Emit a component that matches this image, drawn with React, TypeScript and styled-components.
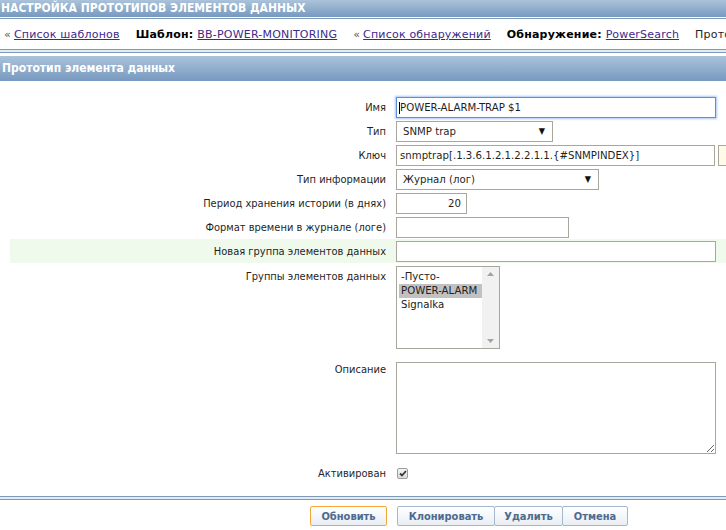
import styled, { createGlobalStyle } from 'styled-components';

const GlobalStyle = createGlobalStyle`
  html, body {
    margin: 0;
    padding: 0;
    background: #ffffff;
  }
  body {
    font-family: "DejaVu Sans Condensed", "DejaVu Sans", sans-serif;
    font-size: 11px;
    color: #1f1f1f;
  }
`;

const Page = styled.div`
  width: 726px;
  height: 530px;
  overflow: hidden;
`;

const Bar = styled.div<{ $tall?: boolean }>`
  height: ${(p) => (p.$tall ? '25px' : '17px')};
  line-height: ${(p) => (p.$tall ? '25px' : '17px')};
  padding-left: ${(p) => (p.$tall ? '2px' : '1px')};
  margin-bottom: ${(p) => (p.$tall ? '0' : '1px')};
  background: linear-gradient(#abc3db, #7799bf);
  color: #ffffff;
  font-weight: bold;
  font-size: 12px;
  white-space: nowrap;
`;

const Rule = styled.div<{ $double?: boolean }>`
  height: ${(p) => (p.$double ? '2px' : '0')};
  border-top: 1px solid #7d9abd;
  border-bottom: ${(p) => (p.$double ? '1px solid #7d9abd' : 'none')};
  background: ${(p) => (p.$double ? '#e4ebf3' : 'transparent')};
`;

const Nav = styled.div`
  display: flex;
  align-items: center;
  height: 29px;
  padding-left: 4px;
  margin-top: 1px;
  white-space: nowrap;
  overflow: hidden;
  font-family: "DejaVu Sans", sans-serif;
  font-size: 11px;
  letter-spacing: 0.2px;
`;

const NavItem = styled.span`
  margin-right: 16px;
  flex: none;
`;

const Quote = styled.span`
  color: #555;
  margin-right: 3px;
`;

const NavLabel = styled.b`
  color: #000;
  margin-right: 4px;
`;

const Link = styled.a`
  color: #3b2a8c;
  text-decoration: underline;
  cursor: pointer;
`;

const Spacer = styled.div`
  height: 3px;
`;

const Form = styled.div`
  padding: 14px 0 0 10px;
`;

const Row = styled.div<{ $hl?: boolean; $top?: boolean }>`
  display: grid;
  grid-template-columns: 376px 1fr;
  column-gap: 10px;
  align-items: ${(p) => (p.$top ? 'start' : 'center')};
  min-height: 24px;
  background: ${(p) => (p.$hl ? '#effaec' : 'transparent')};
`;

const Label = styled.div<{ $pt?: number }>`
  text-align: right;
  white-space: nowrap;
  padding-top: ${(p) => p.$pt ?? 0}px;
`;

const Field = styled.div`
  display: flex;
  align-items: center;
  gap: 3px;
  position: relative;
  white-space: nowrap;
`;

const TextInput = styled.input<{ $w: number; $focus?: boolean; $right?: boolean }>`
  box-sizing: border-box;
  width: ${(p) => p.$w}px;
  height: 21px;
  padding: 0 ${(p) => (p.$right ? '5px' : '3px')};
  border: 1px solid ${(p) => (p.$focus ? '#5b8fdc' : '#a9a79b')};
  box-shadow: ${(p) => (p.$focus ? '0 0 2px 1px #a9c8f3' : 'none')};
  font-family: inherit;
  font-size: 11.3px;
  color: #1f1f1f;
  text-align: ${(p) => (p.$right ? 'right' : 'left')};
  background: #fff;
  outline: none;
`;

const Caret = styled.span`
  position: absolute;
  left: 3px;
  top: 5px;
  width: 1px;
  height: 12px;
  background: #000;
`;

const PickButton = styled.button`
  box-sizing: border-box;
  height: 21px;
  width: 60px;
  flex: none;
  border: 1px solid #a9a79b;
  background: #fdfbe8;
  padding: 0;
`;

const SelectBox = styled.div<{ $w: number }>`
  box-sizing: border-box;
  width: ${(p) => p.$w}px;
  height: 21px;
  display: flex;
  align-items: center;
  justify-content: space-between;
  padding: 0 7px 0 6px;
  border: 1px solid #a9a79b;
  background: #fff;
  font-size: 11.3px;
`;

const Arrow = styled.span`
  font-size: 9px;
  color: #111;
`;

const ListBox = styled.div`
  box-sizing: border-box;
  width: 104px;
  height: 83px;
  margin: 3px 0 13px;
  border: 1px solid #a9a79b;
  display: flex;
  background: #fff;
`;

const Options = styled.div`
  flex: 1;
  padding: 3px 0 0 2px;
`;

const Option = styled.div<{ $sel?: boolean }>`
  line-height: 14px;
  padding-left: 2px;
  background: ${(p) => (p.$sel ? '#c1c1c1' : 'transparent')};
  color: #222;
  font-size: 11.3px;
`;

const ScrollTrack = styled.div`
  width: 17px;
  background: #f1f1f1;
  display: flex;
  flex-direction: column;
  justify-content: space-between;
  align-items: center;
  padding: 5px 0;
`;

const Description = styled.textarea`
  box-sizing: border-box;
  width: 320px;
  height: 92px;
  border: 1px solid #a9a79b;
  font-family: inherit;
  font-size: 11px;
  padding: 2px;
  margin-bottom: 7px;
  outline: none;
  display: block;
`;

const CheckBox = styled.span`
  box-sizing: border-box;
  display: inline-flex;
  align-items: center;
  justify-content: center;
  width: 11px;
  height: 11px;
  margin-left: 1px;
  border: 1px solid #9d9d9d;
  border-radius: 2px;
  background: linear-gradient(#f4f4f4, #dcdcdc);
`;

const Footer = styled.div`
  margin-top: 11px;
`;

const Buttons = styled.div`
  display: flex;
  padding: 6px 0 0 310px;
`;

const Group = styled.div`
  display: flex;
  margin-left: 11px;
`;

const Button = styled.button<{ $main?: boolean; $w: number }>`
  box-sizing: border-box;
  width: ${(p) => p.$w}px;
  height: 20px;
  padding: 0;
  border: 1px solid ${(p) => (p.$main ? '#f5a735' : '#a5b7cd')};
  border-radius: 2px;
  margin-right: -1px;
  background: linear-gradient(#ffffff, #e9eef4);
  color: #4e6a8e;
  font-family: inherit;
  font-size: 11px;
  font-weight: bold;
  cursor: pointer;
`;

const Triangle = ({ up }: { up?: boolean }) => (
  <svg width="7" height="4" viewBox="0 0 7 4">
    <path d={up ? 'M0 4 L3.5 0 L7 4 Z' : 'M0 0 L3.5 4 L7 0 Z'} fill="#a3a3a3" />
  </svg>
);

export default function App() {
  return (
    <Page>
      <GlobalStyle />
      <Bar>НАСТРОЙКА ПРОТОТИПОВ ЭЛЕМЕНТОВ ДАННЫХ</Bar>
      <Rule />
      <Nav>
        <NavItem>
          <Quote>«</Quote>
          <Link>Список шаблонов</Link>
        </NavItem>
        <NavItem>
          <NavLabel>Шаблон:</NavLabel>
          <Link>BB-POWER-MONITORING</Link>
        </NavItem>
        <NavItem>
          <Quote>«</Quote>
          <Link>Список обнаружений</Link>
        </NavItem>
        <NavItem>
          <NavLabel>Обнаружение:</NavLabel>
          <Link>PowerSearch</Link>
        </NavItem>
        <NavItem>Прототипы</NavItem>
      </Nav>
      <Rule $double />
      <Spacer />
      <Bar $tall>Прототип элемента данных</Bar>

      <Form>
        <Row>
          <Label>Имя</Label>
          <Field>
            <TextInput $w={320} $focus defaultValue="POWER-ALARM-TRAP $1" />
            <Caret />
          </Field>
        </Row>
        <Row>
          <Label>Тип</Label>
          <Field>
            <SelectBox $w={157}>
              <span>SNMP trap</span>
              <Arrow>▼</Arrow>
            </SelectBox>
          </Field>
        </Row>
        <Row>
          <Label>Ключ</Label>
          <Field>
            <TextInput $w={319} defaultValue="snmptrap[.1.3.6.1.2.1.2.2.1.1.{#SNMPINDEX}]" />
            <PickButton aria-label="Выбрать" />
          </Field>
        </Row>
        <Row>
          <Label>Тип информации</Label>
          <Field>
            <SelectBox $w={203}>
              <span>Журнал (лог)</span>
              <Arrow>▼</Arrow>
            </SelectBox>
          </Field>
        </Row>
        <Row>
          <Label>Период хранения истории (в днях)</Label>
          <Field>
            <TextInput $w={71} $right defaultValue="20" />
          </Field>
        </Row>
        <Row>
          <Label>Формат времени в журнале (логе)</Label>
          <Field>
            <TextInput $w={173} defaultValue="" />
          </Field>
        </Row>
        <Row $hl>
          <Label>Новая группа элементов данных</Label>
          <Field>
            <TextInput $w={320} defaultValue="" />
          </Field>
        </Row>
        <Row $top>
          <Label $pt={7}>Группы элементов данных</Label>
          <Field>
            <ListBox>
              <Options>
                <Option>-Пусто-</Option>
                <Option $sel>POWER-ALARM</Option>
                <Option>Signalka</Option>
              </Options>
              <ScrollTrack>
                <Triangle up />
                <Triangle />
              </ScrollTrack>
            </ListBox>
          </Field>
        </Row>
        <Row $top>
          <Label $pt={1}>Описание</Label>
          <Field>
            <Description />
          </Field>
        </Row>
        <Row>
          <Label>Активирован</Label>
          <Field>
            <CheckBox>
              <svg width="8" height="7" viewBox="0 0 8 7">
                <path d="M1 3.5 L3 5.5 L7 1" stroke="#3a3a3a" strokeWidth="1.8" fill="none" />
              </svg>
            </CheckBox>
          </Field>
        </Row>
      </Form>

      <Footer>
        <Rule $double />
        <Buttons>
          <Button $main $w={77}>Обновить</Button>
          <Group>
            <Button $w={98}>Клонировать</Button>
            <Button $w={69}>Удалить</Button>
            <Button $w={66}>Отмена</Button>
          </Group>
        </Buttons>
      </Footer>
    </Page>
  );
}
